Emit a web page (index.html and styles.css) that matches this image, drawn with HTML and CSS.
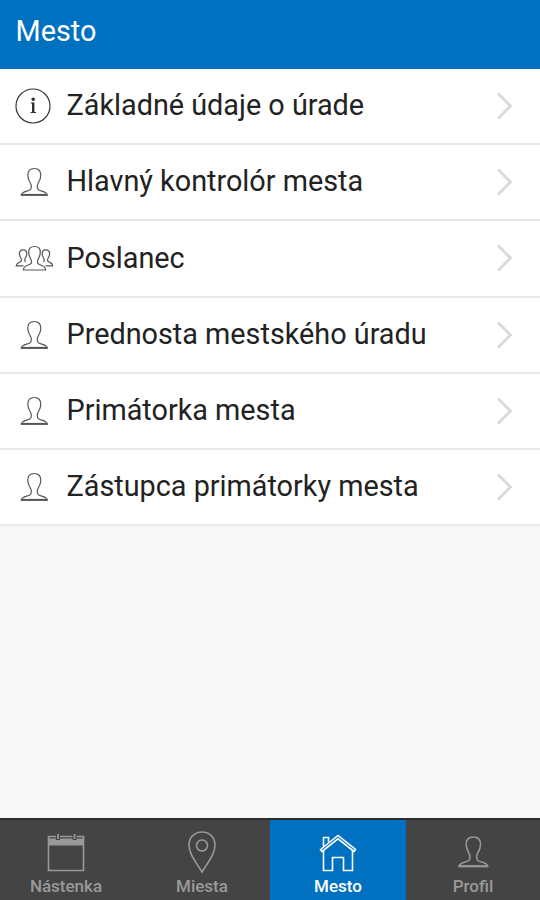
FILE: index.html
```html
<!DOCTYPE html>
<html lang="sk">
<head>
    <meta charset="UTF-8">
    <meta name="viewport" content="width=device-width, initial-scale=1.0">
    <title>Mesto</title>
    <link rel="stylesheet" href="styles.css">
</head>
<body>
    <svg class="sprite">
        <symbol id="info" viewBox="0 0 38 38">
            <circle cx="18" cy="19" r="17"/>
            <path d="M15.800 16h2.800v9.500M15.500 25.500h5.500" stroke-width="1"/>
            <path d="M18.200 15.600v10" stroke-width="2.400"/>
            <circle cx="18.200" cy="12.200" r="1.200" fill="currentColor"/>
        </symbol>
        <symbol id="person" viewBox="0 0 38 38">
            <path d="M19.300 5.500c-4.300 0-6.500 2.500-6.500 6.800 0 3.200 1 5 2.300 7.200 1.500 2.700 1.800 6.300-.3 7.500-2.800 1.500-8 1.300-8.600 5.200h26.200c-.6-3.900-5.800-3.700-8.600-5.200-2.100-1.200-1.800-4.800-.3-7.500 1.300-2.200 2.300-4 2.300-7.200 0-4.300-2.200-6.800-6.500-6.800z"/>
            <path d="M6.500 31.800h25.600" stroke-width="1.800"/>
        </symbol>
        <symbol id="people" viewBox="0 0 38 38">
            <path d="M19.500 7.500c-3.800 0-5.800 2.100-5.800 5.800 0 2.700.7 4.200 1.800 6.200 1.200 2.300 1.300 4.900-.4 5.800-2.200 1.200-6.300 1-6.800 5.700h22.400c-.5-4.700-4.600-4.500-6.800-5.700-1.700-.9-1.600-3.500-.4-5.800 1.100-2 1.800-3.500 1.800-6.200 0-3.700-2-5.800-5.800-5.800z"/>
            <path d="M8.500 26.800H1.200c.3-2.800 2.600-3 4.300-4 1.300-.8 1-2.500.2-4-.8-1.300-1.300-2.400-1.300-4 0-2.500 1.300-4 3.700-4s3.700 1.500 3.700 4c0 1.600-.5 2.700-1.300 4-.8 1.500-1.100 3.200.2 4"/>
            <path d="M30.500 26.800h7.300c-.3-2.800-2.600-3-4.300-4-1.300-.8-1-2.500-.2-4 .8-1.300 1.300-2.400 1.300-4 0-2.500-1.300-4-3.700-4s-3.700 1.500-3.700 4c0 1.600.5 2.700 1.300 4 .8 1.500 1.100 3.200-.2 4"/>
        </symbol>
        <symbol id="chevron" viewBox="0 0 18 28">
            <path d="M1 1.500l12.500 12.500L1 26.500"/>
        </symbol>
        <symbol id="calendar" viewBox="0 0 44 44">
            <path d="M4.500 7.500h35v34h-35z"/>
            <path d="M5 9.500h34v7H5z" fill="currentColor" stroke="none"/>
            <path d="M14 6v5M30.500 6v5" stroke="#444" stroke-width="4"/>
            <path d="M14 5v5M30.500 5v5" stroke-width="1.800"/>
        </symbol>
        <symbol id="pin" viewBox="0 0 44 44">
            <path d="M22 3C14.500 3 9 8.500 9 16c0 9 7 17 13 27 6-10 13-18 13-27 0-7.500-5.500-13-13-13z"/>
            <circle cx="22" cy="16.500" r="5.500"/>
        </symbol>
        <symbol id="house" viewBox="0 0 44 44">
            <path d="M4.500 20.500L22 6.500l17.500 14-1.500 2L22 9.800 6 22.500z"/>
            <path d="M7.500 21.500v20h9v-13h11v13h9v-20M7.500 17.500V8.500h5v5"/>
        </symbol>
    </svg>

    <header class="header">Mesto</header>

    <ul class="list">
        <li class="item">
            <svg class="icon"><use href="#info"/></svg>
            <span class="label">Základné údaje o úrade</span>
            <svg class="arrow"><use href="#chevron"/></svg>
        </li>
        <li class="item">
            <svg class="icon"><use href="#person"/></svg>
            <span class="label">Hlavný kontrolór mesta</span>
            <svg class="arrow"><use href="#chevron"/></svg>
        </li>
        <li class="item">
            <svg class="icon"><use href="#people"/></svg>
            <span class="label">Poslanec</span>
            <svg class="arrow"><use href="#chevron"/></svg>
        </li>
        <li class="item">
            <svg class="icon"><use href="#person"/></svg>
            <span class="label">Prednosta mestského úradu</span>
            <svg class="arrow"><use href="#chevron"/></svg>
        </li>
        <li class="item">
            <svg class="icon"><use href="#person"/></svg>
            <span class="label">Primátorka mesta</span>
            <svg class="arrow"><use href="#chevron"/></svg>
        </li>
        <li class="item">
            <svg class="icon"><use href="#person"/></svg>
            <span class="label">Zástupca primátorky mesta</span>
            <svg class="arrow"><use href="#chevron"/></svg>
        </li>
    </ul>

    <nav class="tabs">
        <a class="tab">
            <svg class="tab-icon"><use href="#calendar"/></svg>
            <span>Nástenka</span>
        </a>
        <a class="tab">
            <svg class="tab-icon"><use href="#pin"/></svg>
            <span>Miesta</span>
        </a>
        <a class="tab active">
            <svg class="tab-icon"><use href="#house"/></svg>
            <span>Mesto</span>
        </a>
        <a class="tab">
            <svg class="tab-icon"><use href="#person"/></svg>
            <span>Profil</span>
        </a>
    </nav>
</body>
</html>
```
FILE: styles.css
```css
body {
    margin: 0;
    height: 100vh;
    display: flex;
    flex-direction: column;
    background-color: #f8f8f8;
    font-family: Roboto, sans-serif;
    color: #222;
}
svg {
    fill: none;
    stroke: currentColor;
}
.sprite {
    display: none;
}
.header {
    box-sizing: border-box;
    height: 69px;
    padding: 13px 15.5px;
    background-color: #0070c0;
    color: #fff;
    font-size: 28.8px;
    line-height: 36px;
}
.list {
    flex: 1;
    margin: 0;
    padding: 0;
    list-style: none;
}
.item {
    box-sizing: border-box;
    height: 76.2px;
    display: flex;
    align-items: center;
    padding: 0 25px 0 15px;
    background-color: #fff;
    border-bottom: 2px solid #e8e8e8;
}
.icon {
    width: 38px;
    height: 38px;
    margin-right: 13.5px;
    stroke-width: 1.2;
    color: #555;
}
.item:first-child .icon {
    color: #333;
}
.label {
    flex: 1;
    padding-bottom: 1.6px;
    font-size: 28.8px;
    line-height: 36px;
}
.arrow {
    width: 18px;
    height: 28px;
    stroke-width: 3;
    color: #dadada;
}
.tabs {
    display: grid;
    grid-template-columns: 134px 136px 136px 134px;
    box-sizing: border-box;
    height: 82px;
    background-color: #444;
    border-top: 2px solid #2c2c2c;
}
.tab {
    display: flex;
    flex-direction: column;
    align-items: center;
    padding-top: 9px;
    font-size: 17px;
    line-height: 20px;
    font-weight: 500;
    color: #999;
}
.tab:first-child {
    padding-right: 2px;
}
.tab-icon {
    width: 44px;
    height: 44px;
    margin-bottom: 3px;
    stroke-width: 1.6;
}
.tab:last-child .tab-icon {
    height: 42px;
    margin-top: 2px;
    stroke-width: 1.4;
}
.tab.active {
    background-color: #0070c0;
    color: #fff;
}
```
